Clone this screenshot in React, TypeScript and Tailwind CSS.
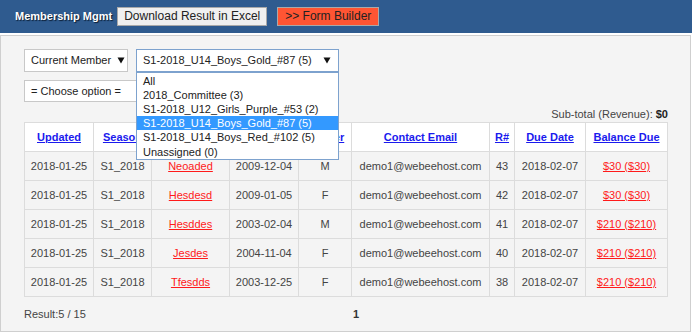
const rows = [
  { updated: "2018-01-25", season: "S1_2018", name: "Neoaded", dob: "2009-12-04", gender: "M", r: 43, balance: "$30 ($30)" },
  { updated: "2018-01-25", season: "S1_2018", name: "Hesdesd", dob: "2009-01-05", gender: "F", r: 42, balance: "$30 ($30)" },
  { updated: "2018-01-25", season: "S1_2018", name: "Hesddes", dob: "2003-02-04", gender: "M", r: 41, balance: "$210 ($210)" },
  { updated: "2018-01-25", season: "S1_2018", name: "Jesdes", dob: "2004-11-04", gender: "F", r: 40, balance: "$210 ($210)" },
  { updated: "2018-01-25", season: "S1_2018", name: "Tfesdds", dob: "2003-12-25", gender: "F", r: 38, balance: "$210 ($210)" },
];

const columns = [
  { label: "Updated", width: "w-[69px]" },
  { label: "Season", width: "w-[58px]" },
  { label: "Name", width: "w-[78px]" },
  { label: "Birthday", width: "w-[69px]" },
  { label: "Gender", width: "w-[53px]" },
  { label: "Contact Email", width: "w-[138px]" },
  { label: "R#", width: "w-[25px]" },
  { label: "Due Date", width: "w-[71px]" },
  { label: "Balance Due", width: "w-[82px]" },
];

const options = [
  "All",
  "2018_Committee (3)",
  "S1-2018_U12_Girls_Purple_#53 (2)",
  "S1-2018_U14_Boys_Gold_#87 (5)",
  "S1-2018_U14_Boys_Red_#102 (5)",
  "Unassigned (0)",
];

function Arrow() {
  return (
    <svg width="8" height="7" viewBox="0 0 8 7" className="shrink-0">
      <path d="M0.5 0.5 L7.5 0.5 L4 6.5 Z" fill="#111" />
    </svg>
  );
}

export default function App() {
  return (
    <div className="h-[333px] w-[692px] overflow-hidden bg-white font-['Liberation_Sans',Arial,sans-serif] text-[#444]">
      <div className="flex h-[33px] items-center bg-[#2f5b8f] pl-[15px]">
        <span className="text-[11px] font-bold text-white [text-shadow:1px_1px_1px_#0b1d33]">
          Membership Mgmt
        </span>
        <button className="ml-[5px] h-[19px] border border-[#a9a9a9] bg-[#f0f0f0] px-[6px] text-[12px] leading-[17px] text-[#222]">
          Download Result in Excel
        </button>
        <button className="ml-[10px] h-[19px] border border-[#a9a9a9] bg-[#ff5533] px-[7px] text-[12px] leading-[17px] text-[#222]">
          &gt;&gt; Form Builder
        </button>
      </div>
      <div className="h-[2px] bg-white" />
      <div className="mr-[1px] h-[297px] border border-[#cfcfcf] bg-[#f4f4f4] px-[23px] pt-[13px]">
        <div className="flex gap-[8px]">
          <div className="flex h-[23px] w-[104px] items-center justify-between border border-[#c8c8c8] bg-white pr-[2px] pl-[6px] text-[11px] text-[#222]">
            <span>Current Member</span>
            <Arrow />
          </div>
          <div className="relative">
            <div className="flex h-[23px] w-[203px] items-center justify-between border border-[#7da2ce] bg-white pr-[7px] pl-[6px] text-[11px] text-[#222]">
              <span>S1-2018_U14_Boys_Gold_#87 (5)</span>
              <Arrow />
            </div>
            <div className="absolute top-[23px] left-0 z-10 w-[203px] border border-[#7da2ce] bg-white py-[0.5px] text-[11px] leading-[14.2px] text-[#222]">
              {options.map((o) => (
                <div
                  key={o}
                  className={
                    o === "S1-2018_U14_Boys_Gold_#87 (5)"
                      ? "bg-[#3399ff] pl-[6px] text-white"
                      : "pl-[6px]"
                  }
                >
                  {o}
                </div>
              ))}
            </div>
          </div>
        </div>
        <div className="mt-[8px] flex h-[22px] w-[130px] items-center border border-[#c8c8c8] bg-white pl-[6px] text-[11px] text-[#222]">
          = Choose option =
        </div>
        <div className="mt-[5px] w-[644px] text-right text-[11px] leading-[14px]">
          Sub-total (Revenue): <b className="text-[#222]">$0</b>
        </div>
        <table className="mt-[1px] w-[644px] table-fixed border-collapse border border-[#d6d6d6] text-center text-[11px]">
          <colgroup>
            {columns.map((c) => (
              <col key={c.label} className={c.width} />
            ))}
          </colgroup>
          <thead>
            <tr className="h-[29px] bg-white">
              {columns.map((c) => (
                <th key={c.label} className="border border-[#dcdcdc] font-bold">
                  <a className="text-[#1a1aee] underline">{c.label}</a>
                </th>
              ))}
            </tr>
          </thead>
          <tbody>
            {rows.map((r) => (
              <tr key={r.r} className="h-[29px] bg-[#f4f4f4]">
                <td className="border border-[#dcdcdc]">{r.updated}</td>
                <td className="border border-[#dcdcdc]">{r.season}</td>
                <td className="border border-[#dcdcdc]">
                  <a className="text-[#ff1a1a] underline">{r.name}</a>
                </td>
                <td className="border border-[#dcdcdc]">{r.dob}</td>
                <td className="border border-[#dcdcdc]">{r.gender}</td>
                <td className="border border-[#dcdcdc]">demo1@webeehost.com</td>
                <td className="border border-[#dcdcdc]">{r.r}</td>
                <td className="border border-[#dcdcdc]">2018-02-07</td>
                <td className="border border-[#dcdcdc]">
                  <a className="text-[#ff1a1a] underline">{r.balance}</a>
                </td>
              </tr>
            ))}
          </tbody>
        </table>
        <div className="mt-[10px] flex w-[644px] text-[11px] leading-[14px]">
          <span className="w-[329px]">Result:5 / 15</span>
          <b className="text-[#333]">1</b>
        </div>
      </div>
    </div>
  );
}
